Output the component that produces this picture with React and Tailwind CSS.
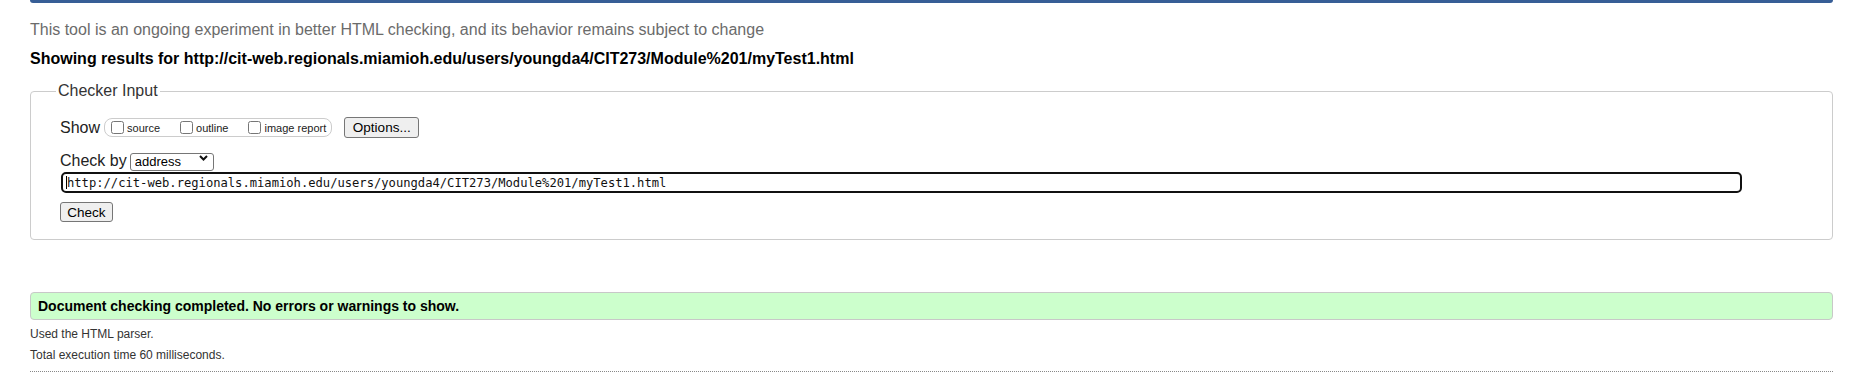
import React from 'react'

const url = 'http://cit-web.regionals.miamioh.edu/users/youngda4/CIT273/Module%201/myTest1.html'

function Box({ label }){
  return (
    <label className="flex items-center">
      <input type="checkbox" className="w-[13px] h-[13px] m-0" />
      <span className="ml-[3px] mt-[2px] text-[11px] leading-[13px] text-[#222]">{label}</span>
    </label>
  )
}

export default function App(){
  return (
    <div className="ml-[30px] w-[1803px] font-['Liberation_Sans',Arial,sans-serif] text-[#222] bg-white">
      <div className="h-[3px] bg-[#375e96] rounded-b-[4px]"></div>

      <p className="mt-[18px] text-[16px] leading-[18px] text-[#6b6b6b]">
        This tool is an ongoing experiment in better HTML checking, and its behavior remains subject to change
      </p>
      <p className="mt-[11px] text-[16px] leading-[18px] font-bold text-black">
        Showing results for {url}
      </p>

      <fieldset className="mt-[14px] border border-[#cccccc] rounded-[4px] pl-[29px] pr-[20px] pt-[17px] pb-[17px]">
        <legend className="ml-[-4px] px-[2px] text-[16px] leading-[18px] text-[#333]">Checker Input</legend>

        <div className="flex items-center h-[21px]">
          <span className="text-[16px] leading-[18px]">Show</span>
          <div className="ml-[4px] h-[19px] flex items-center gap-[20px] border border-[#cccccc] rounded-[8px] pl-[6px] pr-[5px]">
            <Box label="source" />
            <Box label="outline" />
            <Box label="image report" />
          </div>
          <button className="ml-[12px] h-[21px] w-[75px] bg-[#efefef] border border-[#767676] rounded-[3px] text-[13.5px] leading-[15px] text-black">
            Options...
          </button>
        </div>

        <div className="mt-[14px] flex items-center h-[18px]">
          <span className="text-[16px] leading-[18px]">Check by</span>
          <div className="relative ml-[3px]">
            <select defaultValue="address" className="appearance-none w-[84px] h-[18px] border border-[#767676] rounded-[3px] pl-[4px] text-[13px] leading-[15px] text-black bg-white">
              <option value="address">address</option>
              <option value="upload">file upload</option>
              <option value="text">text input</option>
            </select>
            <svg className="absolute right-[6px] top-[6px] pointer-events-none" width="9" height="6" viewBox="0 0 9 6">
              <path d="M1 1 L4.5 4.5 L8 1" fill="none" stroke="#111" strokeWidth="2" />
            </svg>
          </div>
        </div>

        <div className="relative mt-[2px] ml-[1px] w-[1681px] h-[21px] border-2 border-[#111] rounded-[5px] flex items-center">
          <input readOnly value={url} className="w-full h-full pl-[4px] font-['DejaVu_Sans_Mono',Consolas,monospace] text-[12.15px] text-[#111] outline-none bg-transparent" />
          <span className="absolute left-[3px] top-[2px] w-[1px] h-[13px] bg-black"></span>
        </div>

        <button className="mt-[9px] block h-[20px] w-[53px] bg-[#efefef] border border-[#767676] rounded-[3px] text-[13.5px] leading-[15px] text-black">
          Check
        </button>
      </fieldset>

      <div className="mt-[52px] h-[28px] flex items-center bg-[#ccffcc] border border-[#c8c8c8] rounded-[4px] pl-[7px]">
        <p className="text-[14px] leading-[18px] font-bold text-black">
          Document checking completed. No errors or warnings to show.
        </p>
      </div>

      <p className="mt-[4px] text-[12px] leading-[21px] text-[#333]">Used the HTML parser.</p>
      <p className="text-[12px] leading-[21px] text-[#333]">Total execution time 60 milliseconds.</p>
      <div className="mt-[5px] border-t border-dotted border-[#888]"></div>
    </div>
  )
}
